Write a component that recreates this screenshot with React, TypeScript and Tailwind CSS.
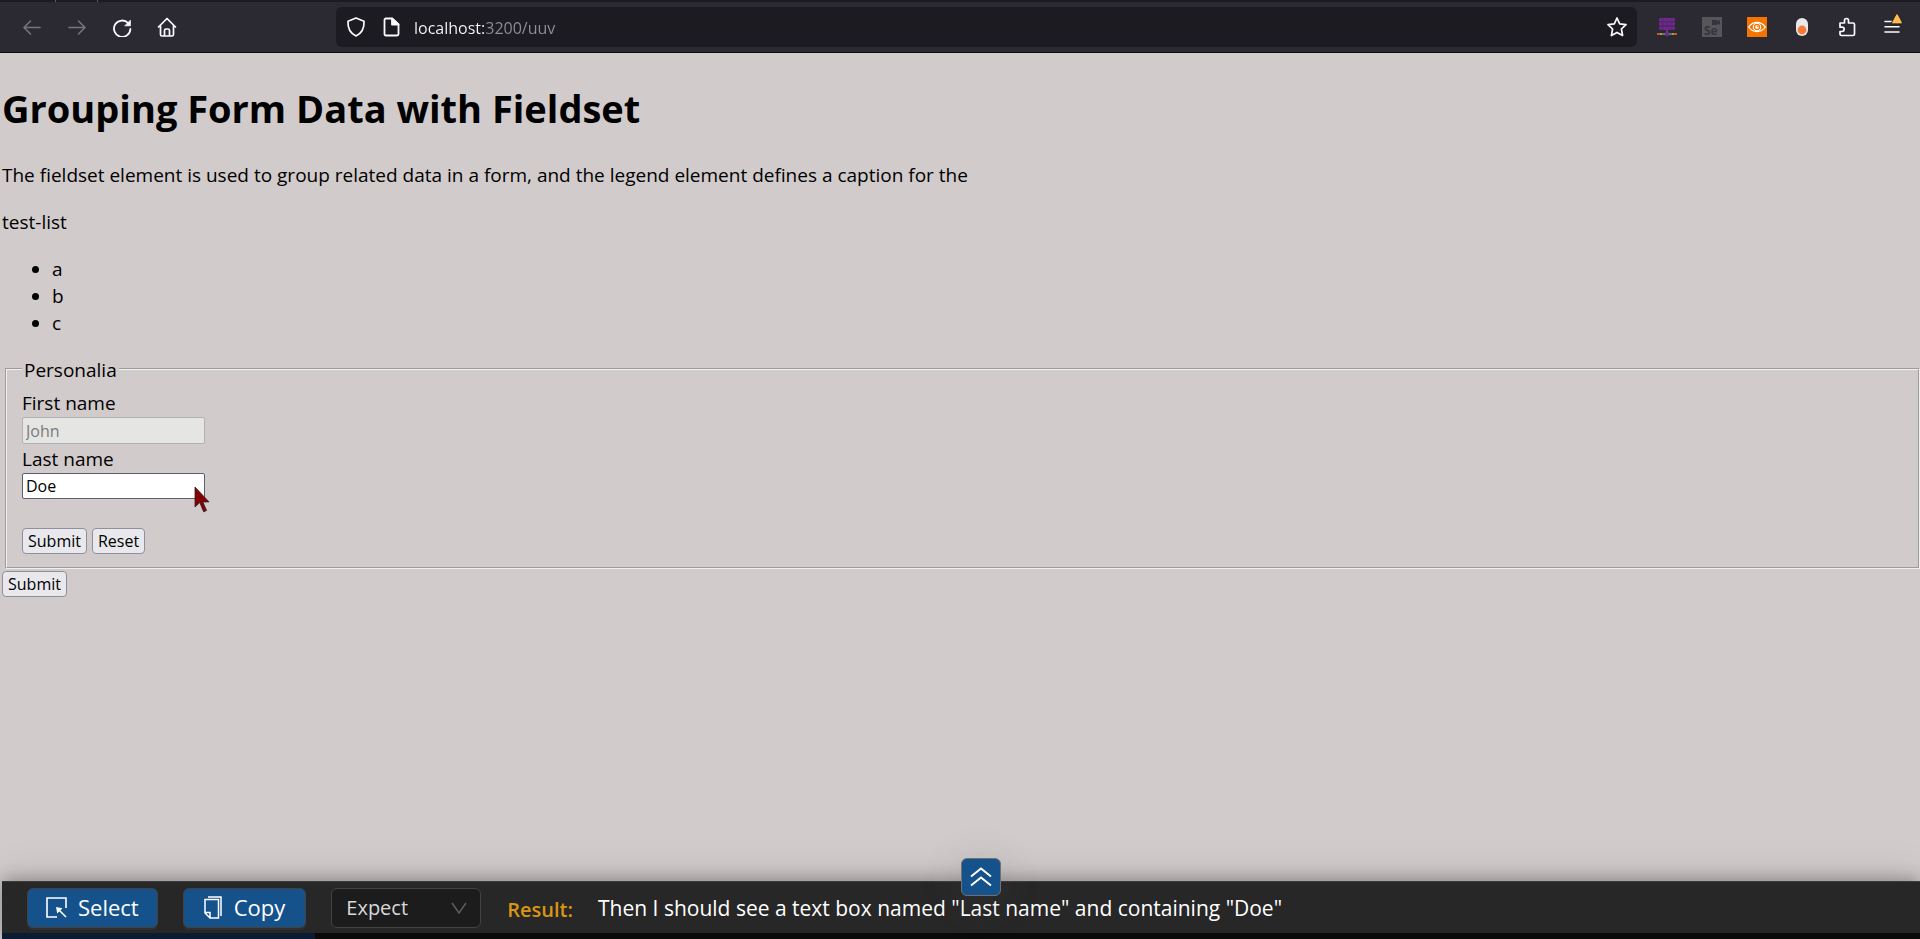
import React from "react";

const stroke = { fill: "none", stroke: "currentColor", strokeLinecap: "round", strokeLinejoin: "round" } as const;

function NavButton({ label, className, children }: { label: string; className: string; children: React.ReactNode }) {
  return (
    <button type="button" aria-label={label} className={`flex size-5 items-center justify-center ${className}`}>
      <svg viewBox="0 0 20 20" className="size-5" {...stroke} strokeWidth={1.6}>
        {children}
      </svg>
    </button>
  );
}

function BrowserBar() {
  return (
    <header className="border-b border-b-[#0c0c0d] bg-[#2b2a33] text-[#fbfbfe]">
      <div className="flex h-0.5 gap-[41px] bg-[#1c1b22] pl-[55px]">
        <span className="w-px bg-[#5b5b66]" />
        <span className="w-px bg-[#5b5b66]" />
      </div>
      <div className="flex items-center py-[5px] pr-[18px] pl-[22px]">
        <nav className="flex items-center gap-[25px]">
          <NavButton label="Back" className="text-[#76757c]">
            <path d="M18 10.500H2M8.500 4L2 10.500l6.500 6.500" />
          </NavButton>
          <NavButton label="Forward" className="text-[#76757c]">
            <path d="M2 10.500h16M11.500 4L18 10.500l-6.500 6.500" />
          </NavButton>
          <NavButton label="Reload" className="">
            <path d="M16.200 6.100A8.200 8.200 0 1 0 18.400 12" strokeWidth={1.8} />
            <path d="M18.400 3.500v5.300h-5.300z" fill="currentColor" strokeWidth={0.8} />
          </NavButton>
          <NavButton label="Home" className="">
            <path d="M1.500 10L10 1.500l8.500 8.500M3.500 9V17.500q0 1.500 1.500 1.500h10q1.500 0 1.500-1.500V9M7.500 18.500v-5q0-1.500 1.500-1.500h2q1.500 0 1.500 1.500v5" strokeWidth={1.7} />
          </NavButton>
        </nav>
        <div className="ml-[159px] flex h-10 flex-1 items-center gap-4 rounded-md bg-[#1c1b22] px-2.5">
          <svg viewBox="0 0 20 20" className="size-5" {...stroke} strokeWidth={1.7}>
            <path d="M10 1l8 3.200c.4 6-1.500 11.500-8 14.800C3.500 15.700 1.600 10.200 2 4.200z" />
          </svg>
          <svg viewBox="0 0 20 20" className="-mr-1 size-5" {...stroke} strokeWidth={1.8}>
            <path d="M3.500 1.500H10l6.500 6V17q0 1.500-1.500 1.500H4Q2.500 18.500 2.500 17V3q0-1.500 1.500-1.500z" />
            <path d="M10 1.500v6h6.500z" fill="currentColor" />
          </svg>
          <input
            aria-label="Address"
            readOnly
            className="min-w-0 flex-1 bg-[linear-gradient(90deg,#fbfbfe_71px,#8f8f98_71px)] bg-clip-text pt-0.5 text-base text-transparent outline-none"
            value="localhost:3200/uuv"
          />
          <button type="button" aria-label="Bookmark this page">
            <svg viewBox="0 0 20 20" className="size-5" {...stroke} strokeWidth={1.7}>
              <path d="M10 1l2.700 5.800 6.300.8-4.600 4.400 1.200 6.500L10 15.400l-5.600 3.100L5.600 12 1 7.600l6.300-.8z" />
            </svg>
          </button>
        </div>
        <div className="ml-5 flex items-center gap-[25px]">
          <button type="button" aria-label="Server tool">
            <svg viewBox="0 0 20 20" className="size-5">
              <g fill="#762a91">
                <rect x="2" y="1" width="16" height="3.400" rx="1" />
                <rect x="2" y="5.200" width="16" height="3.400" rx="1" />
                <rect x="2" y="9.400" width="16" height="3.400" rx="1" />
                <rect x="9" y="12" width="2" height="4" />
                <circle cx="10" cy="17" r="2.200" />
              </g>
              <g stroke="#4c1d66" strokeWidth=".7">
                <path d="M4 2.700h12M4 6.900h12M4 11.100h12" strokeDasharray="3 1.500" />
              </g>
              <path d="M0 17h3M17 17h3" stroke="#c9562c" strokeWidth="1.800" />
              <path d="M3 17h2.500M14.500 17H17" stroke="#b39a36" strokeWidth="1.800" />
              <path d="M5.500 17H8M12 17h2.500" stroke="#3f8f6b" strokeWidth="1.800" />
            </svg>
          </button>
          <button type="button" aria-label="Selenium" className="relative flex size-5 items-end bg-[#55555a] pl-0.5 text-xs leading-3 font-bold text-[#34343a]">
            Se
            <svg viewBox="0 0 8 5" className="absolute top-[3px] right-[2px] h-[5px] w-2" fill="#34343a">
              <path d="M0 0h5.500v1.500L8 0v5L5.500 3.500V5H0z" />
            </svg>
          </button>
          <button type="button" aria-label="Accessibility checker">
            <svg viewBox="0 0 20 20" className="size-5">
              <rect width="20" height="20" fill="#f57400" />
              <path d="M1.700 10C6 3.800 14 3.800 18.300 10 14 16.200 6 16.200 1.700 10z" fill="none" stroke="#fff" strokeWidth="1.300" />
              <circle cx="10" cy="10" r="3.700" fill="none" stroke="#fff" strokeWidth="1.100" />
              <circle cx="10" cy="10" r="1.900" fill="#fff" />
              <circle cx="10.800" cy="9.200" r=".8" fill="#f57400" />
            </svg>
          </button>
          <button type="button" aria-label="Toggle">
            <svg viewBox="0 0 20 20" className="size-5">
              <rect x="4" y="1" width="12" height="18" rx="6" fill="#e8e8ea" />
              <circle cx="10" cy="13" r="4.400" fill="#f47b33" />
            </svg>
          </button>
          <button type="button" aria-label="Extensions">
            <svg viewBox="0 0 20 20" className="size-5" {...stroke} strokeWidth={1.7}>
              <path d="M3 6H7.500V3.500a2 2 0 0 1 4 0V6h4.500q1.500 0 1.500 1.500V17q0 1.500-1.500 1.500H4.500Q3 18.500 3 17v-2.500h2a2 2 0 0 0 0-4.300H3z" />
            </svg>
          </button>
          <button type="button" aria-label="Open application menu" className="relative">
            <svg viewBox="0 0 20 20" className="size-5" {...stroke} strokeWidth={1.6}>
              <path d="M3 4.500h14M3 9.800h14M3 15h14" />
            </svg>
            <svg viewBox="0 0 12 12" className="absolute -top-1 -right-[1px] size-3" fill="#ffbd4f" stroke="#1c1b22" strokeWidth="1">
              <path d="M6 .8q.8 0 1.200.8l4 7.500q.6 1.600-.9 1.800H1.700Q.2 10.700.8 9.100l4-7.500Q5.200.8 6 .8z" />
            </svg>
          </button>
        </div>
      </div>
    </header>
  );
}

const formButton =
  "h-[26px] rounded border border-[#8f8f9d] bg-[#e9e9ed] px-[5px] text-base leading-6";

function FormPage() {
  return (
    <main className="flex-1 pl-0.5 text-[19px] leading-[27px] text-black">
      <h1 className="mt-7 mb-[27px] text-[38px] leading-[54px] font-bold">Grouping Form Data with Fieldset</h1>
      <p className="mb-5">
        The fieldset element is used to group related data in a form, and the legend element defines a caption for the
      </p>
      <p className="mb-5">test-list</p>
      <ul className="mb-4 list-disc pl-[50px]">
        <li>a</li>
        <li>b</li>
        <li>c</li>
      </ul>
      <form>
        <fieldset className="ml-[3px] border-2 border-[#f0f0f0] px-[15px] pb-[13px] [border-style:groove]">
          <legend className="px-0.5 pt-1">Personalia</legend>
          <label htmlFor="first" className="mt-1.5 block">First name</label>
          <input
            id="first"
            disabled
            defaultValue="John"
            className="block h-[27px] w-[183px] rounded-xs border border-[#b1b0b6] bg-[#e5e5e3] px-[3px] text-base text-[#7b7b7b]"
          />
          <label htmlFor="last" className="mt-0.5 block">Last name</label>
          <div className="relative w-[183px]">
            <input
              id="last"
              defaultValue="Doe"
              className="block h-[26px] w-full rounded-xs border border-[#5f5f6e] bg-white px-[3px] text-base"
            />
            <svg viewBox="0 0 16 26" className="absolute top-3.5 -right-[5px] h-[26px] w-4">
              <path d="M1 0v20l4.800-4.500 3.800 9.300 3-1.300-3.800-8.600H15z" fill="#850006" stroke="#2f2020" strokeWidth=".8" />
            </svg>
          </div>
          <div className="mt-[29px] flex gap-[5px]">
            <button type="submit" className={formButton}>Submit</button>
            <button type="reset" className={formButton}>Reset</button>
          </div>
        </fieldset>
        <button type="submit" className={`mt-0.5 block ${formButton}`}>Submit</button>
      </form>
    </main>
  );
}

const actionButton =
  "flex h-10 items-center rounded-md border border-[#424242] bg-[#15528c] text-[22px] text-white shadow-[0_2px_0_#303030]";

function AssistantBar() {
  return (
    <footer className="relative ml-0.5 bg-[#0a0a0a] shadow-[0_-8px_40px_rgba(0,0,0,0.08),0_-2px_16px_rgba(0,0,0,0.3)]">
      <div className="flex h-[52px] items-center border-t border-[#3c3c3c] bg-[#272727] pl-[25px]">
        <button type="button" className={`gap-[11px] px-[18px] ${actionButton}`}>
          <svg viewBox="0 0 21 21" className="size-[21px]" fill="none" stroke="currentColor" strokeWidth="1.600">
            <path d="M11 20H1V1h19v10M20 20l-8-8" />
            <path d="M10 10l6.500 1.200-5.300 5.300z" fill="currentColor" stroke="none" />
          </svg>
          Select
        </button>
        <button type="button" className={`ml-[25px] gap-3 px-5 ${actionButton}`}>
          <svg viewBox="0 0 18 23" className="h-[23px] w-[18px]" fill="none" stroke="currentColor" strokeWidth="1.500">
            <path d="M4 1h13v19M1 3.500h13.500V22H6l-5-5zM1 16.500h5V22" />
          </svg>
          Copy
        </button>
        <div className="relative ml-[25px]">
          <select
            aria-label="Action"
            className="block h-10 w-[150px] appearance-none rounded-md border border-[#424242] bg-[#1c1c1c] pl-3.5 text-xl text-[#d8d8d8]"
          >
            <option>Expect</option>
          </select>
          <svg viewBox="0 0 16 12" className="pointer-events-none absolute top-3.5 right-3.5 h-3 w-4" fill="none" stroke="#606060" strokeWidth="1.400">
            <path d="M1 1l7 10 7-10" />
          </svg>
        </div>
        <span className="ml-[26px] pt-1 text-xl font-semibold text-[#d89614]">Result:</span>
        <span className="ml-[25px] pt-0.5 text-[21px] text-white">
          Then I should see a text box named "Last name" and containing "Doe"
        </span>
      </div>
      <div className="h-1.5 w-[313px] bg-[#0b1b33]" />
      <button
        type="button"
        aria-label="Expand panel"
        className="absolute -top-[23px] left-1/2 flex h-[38px] w-10 items-center justify-center rounded-md border border-[#6f7173] bg-[#15528c] text-white shadow-[0_6px_40px_rgba(90,90,90,0.2)]"
      >
        <svg viewBox="0 0 22 20" className="h-5 w-[22px]" fill="none" stroke="currentColor" strokeWidth="2">
          <path d="M1 9.500L11 1.500l10 8M1 18.500l10-8 10 8" />
        </svg>
      </button>
    </footer>
  );
}

export default function App() {
  return (
    <div className="flex min-h-screen flex-col bg-[#d1cbcb] font-['Open_Sans','Noto_Sans',sans-serif]">
      <BrowserBar />
      <FormPage />
      <AssistantBar />
    </div>
  );
}
